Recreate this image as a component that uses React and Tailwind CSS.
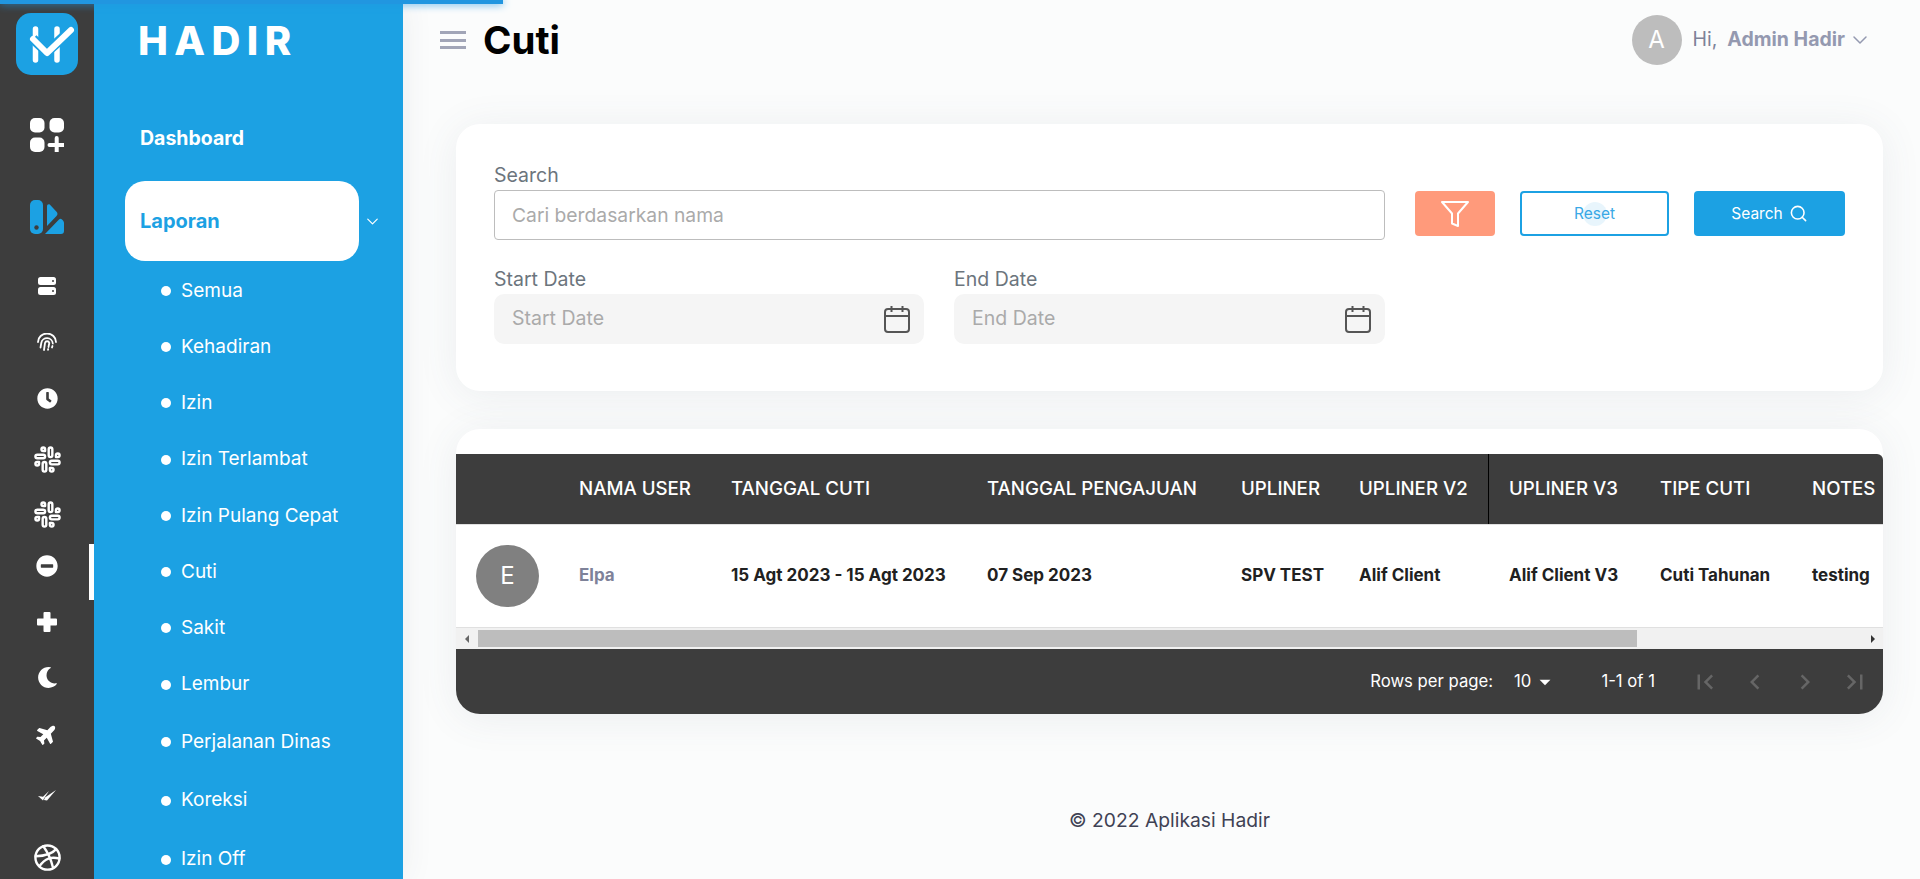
import { ChevronDown, Search } from "lucide-react";
import { FiSlack, FiDribbble } from "react-icons/fi";
import { FaClock, FaMinusCircle, FaMoon, FaPlane } from "react-icons/fa";
import { MdArrowDropDown, MdChevronLeft, MdChevronRight, MdFirstPage, MdLastPage } from "react-icons/md";

const subMenu = [
  { label: "Semua", h: "h-[56px]" },
  { label: "Kehadiran", h: "h-[56px]" },
  { label: "Izin", h: "h-[56px]" },
  { label: "Izin Terlambat", h: "h-[57px]" },
  { label: "Izin Pulang Cepat", h: "h-[56px]" },
  { label: "Cuti", h: "h-[56px]" },
  { label: "Sakit", h: "h-[56px]" },
  { label: "Lembur", h: "h-[57px]" },
  { label: "Perjalanan Dinas", h: "h-[58px]" },
  { label: "Koreksi", h: "h-[59px]" },
  { label: "Izin Off", h: "h-[59px]" },
];

const columns = [
  { label: "NAMA USER", value: "Elpa", w: "w-[152px]" },
  { label: "TANGGAL CUTI", value: "15 Agt 2023 - 15 Agt 2023", w: "w-[256px]" },
  { label: "TANGGAL PENGAJUAN", value: "07 Sep 2023", w: "w-[254px]" },
  { label: "UPLINER", value: "SPV TEST", w: "w-[118px]" },
];

function Logo() {
  return (
    <svg width="62" height="62" viewBox="0 0 62 62">
      <rect width="62" height="62" rx="15" fill="#1ca1e3" />
      <path d="M19.5 16v31M41 16v31" stroke="#fff" strokeWidth="5.5" strokeLinecap="round" />
      <path d="M17 26l14 13 24-22" fill="none" stroke="#1ca1e3" strokeWidth="10" />
      <path d="M17 26l14 14 24-23" fill="none" stroke="#fff" strokeWidth="6" strokeLinecap="round" strokeLinejoin="round" />
    </svg>
  );
}

function GridPlus() {
  return (
    <svg width="34" height="34" viewBox="0 0 34 34" fill="#fff">
      <rect width="14.5" height="14.5" rx="5" />
      <rect x="19.5" width="14.5" height="14.5" rx="5" />
      <rect y="19.5" width="14.5" height="14.5" rx="5" />
      <path d="M26.7 20v14M19.5 27h14" stroke="#fff" strokeWidth="4" strokeLinecap="round" />
    </svg>
  );
}

function LayoutIcon() {
  return (
    <svg width="34" height="34" viewBox="0 0 34 34" fill="#1ca1e3">
      <rect width="13" height="34" rx="5" />
      <circle cx="6.5" cy="27.5" r="2.2" fill="#3d3d3d" />
      <path d="M17 6.500c0-2 1.500-2.800 3-1.800l6.500 7c1.300 1.300 1.300 3 0 4.300L17 26z" />
      <path d="M15 34l14-14.500c1-1 2-1 3 0l1 1c.700.700 1 1.500 1 2.500v8c0 2-1 3-3 3z" />
    </svg>
  );
}

function ServerIcon() {
  return (
    <svg width="18" height="18" viewBox="0 0 18 18">
      <rect width="18" height="8" rx="2.500" fill="#fff" />
      <rect y="10" width="18" height="8" rx="2.500" fill="#fff" />
      <circle cx="15" cy="4" r="1" fill="#3d3d3d" />
      <circle cx="15" cy="14" r="1" fill="#3d3d3d" />
    </svg>
  );
}

function FingerprintIcon() {
  return (
    <svg width="20" height="18" viewBox="0 0 20 18" fill="none" stroke="#fff" strokeWidth="1.800" strokeLinecap="round">
      <path d="M1 9A9 8.500 0 0 1 19 9" />
      <path d="M3.500 14.500L4.300 10A5.800 5.800 0 0 1 15.800 10.500" />
      <path d="M7 17l1-7A2.200 2.200 0 0 1 12.300 10L11.500 14" />
      <path d="M11 16.800l.2-.8M15 14.500l.5-1.500" />
    </svg>
  );
}

function CrossIcon() {
  return (
    <svg width="20" height="20" viewBox="0 0 20 20" fill="#fff">
      <path d="M6.500 1a1 1 0 0 1 1-1h5a1 1 0 0 1 1 1v5.500H19a1 1 0 0 1 1 1v5a1 1 0 0 1-1 1h-5.500V19a1 1 0 0 1-1 1h-5a1 1 0 0 1-1-1v-5.500H1a1 1 0 0 1-1-1v-5a1 1 0 0 1 1-1h5.500z" />
    </svg>
  );
}

function SlantCheck() {
  return (
    <svg width="18" height="11" viewBox="0 0 18 11" fill="#fff">
      <path d="M0 6l5 .8L11 1 6 8.500l-1 2z" />
      <path d="M7 7.500L18 0 9 10.500 6 10z" />
    </svg>
  );
}

function CalendarIcon() {
  return (
    <svg width="26" height="28" viewBox="0 0 26 28" fill="none" stroke="#555" strokeWidth="2">
      <rect x="1" y="4" width="24" height="23" rx="3" />
      <path d="M1 11h24M7.500 1v6M18.500 1v6" />
    </svg>
  );
}

function FunnelIcon() {
  return (
    <svg width="28" height="26" viewBox="0 0 28 26" fill="none" stroke="#fff" strokeWidth="2">
      <path d="M1 1h26L17 12.500V25l-6-2.500V12.500z" strokeLinejoin="round" />
    </svg>
  );
}

function Rail() {
  return (
    <div className="relative z-20 flex h-full w-[94px] shrink-0 flex-col items-center bg-[#3d3d3d]">
      <div className="mt-[13px] h-[62px]"><Logo /></div>
      <div className="mt-[43px] h-[34px]"><GridPlus /></div>
      <div className="mt-[48px] h-[34px]"><LayoutIcon /></div>
      <div className="mt-[43px] h-[18px]"><ServerIcon /></div>
      <div className="mt-[38px] h-[18px] pr-[1px]"><FingerprintIcon /></div>
      <FaClock className="mt-[37px] h-[21px] w-[21px] text-white" />
      <FiSlack className="mt-[36px] h-[29px] w-[29px] text-white" />
      <FiSlack className="mt-[26px] h-[29px] w-[29px] text-white" />
      <FaMinusCircle className="mt-[26px] h-[22px] w-[22px] text-white" />
      <div className="mt-[35px] h-[20px]"><CrossIcon /></div>
      <FaMoon className="mt-[35px] h-[21px] w-[21px] text-white" />
      <FaPlane className="mt-[35px] h-[22px] w-[22px] -rotate-45 text-white" />
      <div className="mt-[45px] h-[11px]"><SlantCheck /></div>
      <FiDribbble className="mt-[42px] h-[29px] w-[29px] text-white" />
      <div className="absolute right-0 top-[544px] h-[56px] w-[5px] bg-white" />
    </div>
  );
}

function Menu() {
  return (
    <div className="relative z-10 h-full w-[309px] shrink-0 overflow-hidden bg-[#1ca1e3] pl-[31px] text-white shadow-[0_0_30px_rgba(60,70,90,0.08)]">
      <div className="flex h-[82px] items-start pl-[13px] pt-[16px] text-[40px] font-extrabold leading-[50px] tracking-[0.16em]">HADIR</div>
      <div className="flex h-[99px] items-center pl-[15px] pt-[15px] text-[19.500px] font-bold">Dashboard</div>
      <div className="flex items-center">
        <div className="flex h-[80px] w-[234px] items-center rounded-[20px] bg-white pl-[15px] text-[20px] font-bold text-[#1ca1e3]">Laporan</div>
        <ChevronDown className="ml-[4px] h-[19px] w-[19px] text-white" strokeWidth={1.5} />
      </div>
      <ul className="mt-[2px] pl-[36px]">
        {subMenu.map((item) => (
          <li key={item.label} className={`flex items-center gap-[10px] text-[19px] ${item.h}`}>
            <span className="h-[10px] w-[10px] rounded-full bg-white" />
            {item.label}
          </li>
        ))}
      </ul>
    </div>
  );
}

function Header() {
  return (
    <div className="flex h-[80px] items-center justify-between pr-[48px]">
      <div className="flex items-center">
        <div className="flex w-[26px] flex-col gap-[4.500px]">
          <span className="h-[3px] bg-[#a1a5b7]" />
          <span className="h-[3px] bg-[#a1a5b7]" />
          <span className="h-[3px] bg-[#a1a5b7]" />
        </div>
        <h1 className="ml-[17px] text-[38.500px] font-bold leading-none text-black">Cuti</h1>
      </div>
      <div className="flex items-center">
        <div className="flex h-[50px] w-[50px] items-center justify-center rounded-full bg-[#bdbdbd] text-[24px] text-white">A</div>
        <span className="ml-[11px] text-[19.500px] text-[#7e8299]">Hi,</span>
        <span className="ml-[10px] text-[19.500px] font-bold text-[#9499b0]">Admin Hadir</span>
        <ChevronDown className="ml-[3px] h-[24px] w-[24px] text-[#9499b0]" strokeWidth={1.5} />
      </div>
    </div>
  );
}

function FilterCard() {
  return (
    <div className="mt-[44px] flex h-[267px] rounded-[24px] bg-white pl-[38px] pt-[39px] shadow-[0_4px_40px_rgba(80,90,110,0.09)]">
      <div className="w-[891px]">
        <label className="mb-[3px] block text-[19.500px] leading-[24px] text-[#6c757d]">Search</label>
        <div className="flex h-[50px] items-center rounded-[4px] border border-[#bdbdbd] pl-[17px] text-[19.300px] text-[#aaaaaa]">Cari berdasarkan nama</div>
        <div className="mt-[27px] flex gap-[30px]">
          <div className="w-[430px]">
            <label className="mb-[3px] block text-[19.500px] leading-[24px] text-[#6c757d]">Start Date</label>
            <div className="flex h-[50px] items-center justify-between rounded-[10px] bg-[#f5f5f5] pl-[18px] pr-[14px] text-[19.500px] text-[#aaaaaa]">
              Start Date
              <CalendarIcon />
            </div>
          </div>
          <div className="w-[431px]">
            <label className="mb-[3px] block text-[19.500px] leading-[24px] text-[#6c757d]">End Date</label>
            <div className="flex h-[50px] items-center justify-between rounded-[10px] bg-[#f5f5f5] pl-[18px] pr-[14px] text-[19.500px] text-[#aaaaaa]">
              End Date
              <CalendarIcon />
            </div>
          </div>
        </div>
      </div>
      <div className="ml-[30px] mt-[28px] flex h-[45px] items-start">
        <button className="flex h-[45px] w-[80px] items-center justify-center rounded-[4px] bg-[#ff9a7b]"><FunnelIcon /></button>
        <button className="relative ml-[25px] flex h-[45px] w-[149px] items-center justify-center rounded-[4px] border-2 border-[#1ca1e3] text-[15.500px] text-[#3ba9e6]">
          <span className="absolute h-[24px] w-[24px] rounded-full bg-[#1ca1e3]/10" />
          Reset
        </button>
        <button className="ml-[25px] flex h-[45px] w-[151px] items-center justify-center gap-[6px] rounded-[4px] bg-[#1ca1e3] text-[15.500px] text-white">
          Search
          <Search className="h-[19px] w-[19px]" strokeWidth={2} />
        </button>
      </div>
    </div>
  );
}

function Scrollbar() {
  return (
    <div className="flex h-[22px] items-center border-t border-[#e0e0e0] bg-[#f1f1f1]">
      <span className="ml-[9px] h-0 w-0 border-y-[4px] border-r-[4px] border-y-transparent border-r-[#666]" />
      <div className="ml-[9px] h-[17px] w-[1159px] bg-[#bdbdbd]" />
      <span className="ml-auto mr-[8px] h-0 w-0 border-y-[4px] border-l-[4px] border-y-transparent border-l-[#333]" />
    </div>
  );
}

function TableCard() {
  return (
    <div className="mt-[38px] rounded-[24px] bg-white pt-[25px] shadow-[0_4px_40px_rgba(80,90,110,0.09)]">
      <div className="flex h-[70px] items-center rounded-tr-[6px] bg-[#3d3d3d] text-[18.700px] font-medium text-white">
        <div className="w-[123px]" />
        {columns.map((col) => (
          <div key={col.label} className={col.w}>{col.label}</div>
        ))}
        <div className="flex h-full w-[130px] items-center border-r border-black">UPLINER V2</div>
        <div className="w-[171px] pl-[20px]">UPLINER V3</div>
        <div className="w-[152px]">TIPE CUTI</div>
        <div className="w-[71px] whitespace-nowrap">NOTES</div>
      </div>
      <div className="flex h-[103px] items-center border-t border-[#e0e0e0] bg-white text-[17px] font-bold text-[#212121]">
        <div className="w-[123px] pl-[20px]">
          <div className="flex h-[62px] w-[63px] items-center justify-center rounded-full bg-[#808080] text-[24px] font-normal text-white">E</div>
        </div>
        {columns.map((col, i) => (
          <div key={col.label} className={`${col.w} ${i === 0 ? "text-[#7e8299]" : ""}`}>{col.value}</div>
        ))}
        <div className="w-[130px]">Alif Client</div>
        <div className="w-[171px] pl-[20px]">Alif Client V3</div>
        <div className="w-[152px]">Cuti Tahunan</div>
        <div className="w-[71px]">testing</div>
      </div>
      <Scrollbar />
      <div className="flex h-[65px] items-center justify-end rounded-b-[24px] bg-[#3d3d3d] pr-[13px] text-[16.700px] text-white">
        <span>Rows per page:</span>
        <span className="ml-[21px]">10</span>
        <MdArrowDropDown className="ml-[1px] h-[26px] w-[26px]" />
        <span className="ml-[43px]">1-1 of 1</span>
        <div className="ml-[35px] flex gap-[20px] text-[#666]">
          <MdFirstPage className="h-[30px] w-[30px]" />
          <MdChevronLeft className="h-[30px] w-[30px]" />
          <MdChevronRight className="h-[30px] w-[30px]" />
          <MdLastPage className="h-[30px] w-[30px]" />
        </div>
      </div>
    </div>
  );
}

export default function App() {
  return (
    <div className="relative flex h-[879px] w-full overflow-hidden bg-[#fbfcfc] font-['Inter',sans-serif]">
      <div className="absolute left-0 top-0 z-30 h-[4px] w-[503px] bg-[#2196e0] shadow-[0_0_8px_#2196e0]" />
      <Rail />
      <Menu />
      <main className="flex-1 pl-[37px]">
        <Header />
        <div className="ml-[16px] mr-[37px]">
          <FilterCard />
          <TableCard />
          <p className="mt-[92px] text-center text-[19.300px] text-[#3f4254]">© 2022 Aplikasi Hadir</p>
        </div>
      </main>
    </div>
  );
}
